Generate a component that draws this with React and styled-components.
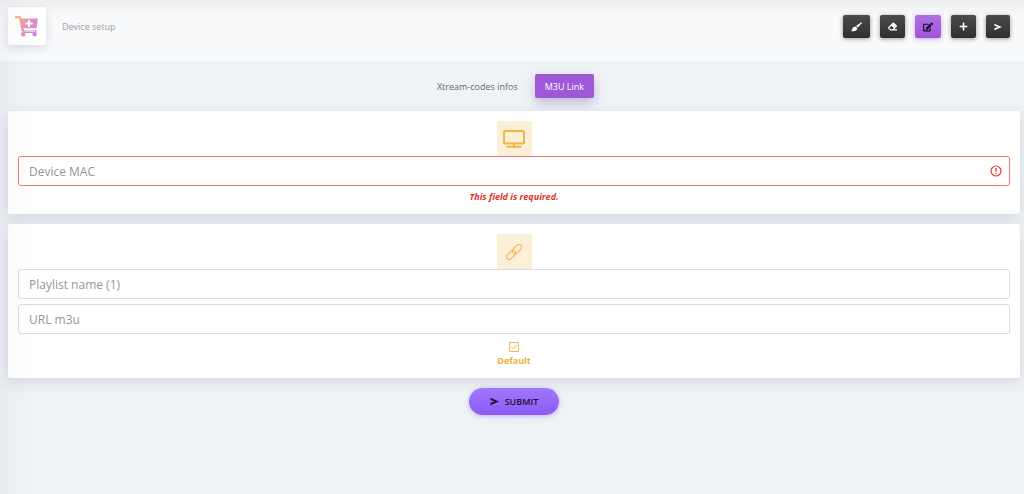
import { useState } from 'react';
import styled, { createGlobalStyle, css } from 'styled-components';
import { FaEdit, FaEraser, FaPlus } from 'react-icons/fa';

const GlobalStyle = createGlobalStyle`
  * {
    box-sizing: border-box;
  }
  body {
    margin: 0;
    min-height: 100vh;
    background-color: #eff3f6;
    font-family: 'Open Sans', 'Noto Sans', sans-serif;
    font-size: 9px;
    color: #333;
  }
  button,
  input {
    font-family: inherit;
  }
`;

const PageStyled = styled.div`
  min-height: 100vh;

  /* soft shade along the left edge */
  &::before {
    content: '';
    position: fixed;
    inset: 0 auto 0 0;
    width: 32px;
    background: linear-gradient(to right, rgba(60, 50, 80, 0.03), transparent);
    pointer-events: none;
  }
`;

const HeaderStyled = styled.header`
  display: flex;
  align-items: flex-start;
  justify-content: space-between;
  height: 61px;
  padding: 7px 14px 0 8px;
  background: linear-gradient(#eeeff1, #f7f9fb 16px);
`;

const BrandStyled = styled.div`
  display: flex;
  align-items: center;
  gap: 16px;
`;

const LogoStyled = styled.a`
  display: flex;
  align-items: center;
  justify-content: center;
  width: 38px;
  height: 38px;
  border-radius: 2px;
  background-color: white;
  box-shadow: 0 3px 8px rgba(60, 60, 90, 0.15);
`;

const TitleStyled = styled.h1`
  margin: 0;
  font-size: 9px;
  font-weight: 400;
  color: #a0a0a2;
`;

const ToolbarStyled = styled.div`
  display: flex;
  gap: 10px;
  padding-top: 8px;
`;

const ToolButtonStyled = styled.button`
  display: flex;
  align-items: center;
  justify-content: center;
  height: 23px;
  padding: 0 8px;
  border: none;
  border-radius: 2px;
  cursor: pointer;
  color: white;
  background: linear-gradient(#4b4b4b, #303030);
  box-shadow: 0 1px 4px rgba(0, 0, 0, 0.4);

  ${({ $active }) =>
    $active &&
    css`
      color: #160d22;
      background: linear-gradient(#af70e2, #9e55d8);
      box-shadow: 0 1px 4px rgba(158, 85, 216, 0.5);
    `}
`;

const MainStyled = styled.main`
  padding: 13px 4px 20px 8px;
`;

const TabsStyled = styled.div`
  display: flex;
  justify-content: center;
  margin-bottom: 13px;
`;

const TabStyled = styled.button`
  height: 24px;
  margin-right: 7px;
  padding: 0 10px;
  border: none;
  border-radius: 2px;
  font-size: 9px;
  cursor: pointer;
  color: ${({ $active }) => ($active ? 'white' : '#66696d')};
  background-color: ${({ $active }) => ($active ? '#9d58d8' : 'transparent')};
  box-shadow: ${({ $active }) => ($active ? '0 5px 12px rgba(100, 50, 150, 0.3)' : 'none')};
`;

const FormStyled = styled.form`
  display: flex;
  flex-direction: column;
  gap: 10px;
`;

const CardStyled = styled.section`
  display: flex;
  flex-direction: column;
  align-items: center;
  padding: 10px;
  border-radius: 2px;
  background-color: white;
  box-shadow: 0 4px 14px rgba(50, 40, 70, 0.13);
`;

const BadgeStyled = styled.div`
  display: flex;
  align-items: center;
  justify-content: center;
  width: 35px;
  height: 35px;
  border-radius: 2px;
  color: #f1b443;
  background-color: #fcefd8;
`;

const FieldsStyled = styled.div`
  display: flex;
  flex-direction: column;
  gap: 5px;
  width: 100%;
`;

const FieldStyled = styled.div`
  position: relative;
  color: #e0413a;

  svg {
    position: absolute;
    top: 9px;
    right: 8px;
  }
`;

const InputStyled = styled.input`
  display: block;
  width: 100%;
  height: 30px;
  padding: 0 10px;
  border: 1px solid ${({ $invalid }) => ($invalid ? '#ea7871' : '#dcdde4')};
  border-radius: 3px;
  outline: none;
  font-size: 12px;
  color: #333;
  background-color: white;

  &::placeholder {
    color: #92969b;
    opacity: 1;
  }
`;

const ErrorStyled = styled.p`
  margin: 5px 0 1px;
  font-size: 9px;
  line-height: 12px;
  font-weight: 700;
  font-style: italic;
  color: #dd332d;
`;

const DefaultStyled = styled.label`
  display: flex;
  flex-direction: column;
  align-items: center;
  gap: 2px;
  margin-top: 8px;
  font-size: 9px;
  line-height: 14px;
  font-weight: 700;
  cursor: pointer;
  color: #f0b13e;
`;

const CheckStyled = styled.span`
  display: grid;

  input,
  svg {
    grid-area: 1 / 1;
    width: 10px;
    height: 10px;
    margin: 0;
  }
  input {
    appearance: none;
    border: 1px solid #f0b655;
    border-radius: 1px;
  }
  svg {
    visibility: hidden;
    pointer-events: none;
  }
  input:checked + svg {
    visibility: visible;
  }
`;

const SubmitStyled = styled.button`
  display: flex;
  align-items: center;
  align-self: center;
  gap: 6px;
  height: 27px;
  padding: 0 21px;
  border: none;
  border-radius: 14px;
  font-size: 9px;
  font-weight: 600;
  cursor: pointer;
  color: #1c1230;
  background: linear-gradient(#a276fb, #8c5bf6);
  box-shadow: 0 1px 5px rgba(140, 91, 246, 0.45);
`;

const CartIcon = () => (
  <svg width="24" height="21" viewBox="0 0 24 21" aria-hidden="true">
    <defs>
      <linearGradient id="cart" x1="0" y1="0" x2="24" y2="21" gradientUnits="userSpaceOnUse">
        <stop offset="0" stopColor="#f5b87a" />
        <stop offset="0.5" stopColor="#e38ebd" />
        <stop offset="1" stopColor="#cf80ee" />
      </linearGradient>
    </defs>
    <g fill="url(#cart)">
      <path
        fillRule="evenodd"
        d="M1 0H5.4L6.2 2.6H23L21.4 12.2H8.2L9 14H21.4V17H8.4V15.6H6.8L4 2.2H1A1.1 1.1 0 0 1 1 0ZM13 4V6.4H10.4V8.4H13V11H15V8.4H17.6V6.4H15V4ZM9.4 14.6V15.6H20V14.6Z"
      />
      <circle cx="8.2" cy="18.2" r="2.2" />
      <circle cx="19.6" cy="18.2" r="2.2" />
    </g>
  </svg>
);

const BrushIcon = () => (
  <svg width="11" height="10" viewBox="0 0 11 10" fill="currentColor" aria-hidden="true">
    <path d="M10.3.2Q11.2.4 10.7 1.2L6.8 5.6 5 4.1Z" />
    <path d="M4.4 4.4 6.4 6.2C6.2 8.6 3.4 9.6 0 9 1.6 8 .8 4.8 4.4 4.4Z" />
  </svg>
);

const SendIcon = ({ size = 9 }) => (
  <svg width={size} height={size} viewBox="0 0 18 18" fill="currentColor" aria-hidden="true">
    <path d="M1 1.5 17.5 9 1 16.5V12L9 9 1 6Z" />
  </svg>
);

const DisplayIcon = () => (
  <svg width="22" height="18" viewBox="0 0 22 18" fill="none" stroke="currentColor" aria-hidden="true">
    <rect x="1" y="1" width="20" height="12.5" rx="1" strokeWidth="2" />
    <path d="M11 14v2M3.5 16.8h15" strokeWidth="2" />
  </svg>
);

const LinkIcon = () => (
  <svg width="16" height="16" viewBox="0 0 16 16" fill="none" stroke="currentColor" aria-hidden="true">
    <g transform="rotate(-45 8 8)">
      <rect x="-1.5" y="5.3" width="10.8" height="5.4" rx="2.7" />
      <rect x="6.7" y="5.3" width="10.8" height="5.4" rx="2.7" />
    </g>
  </svg>
);

const AlertIcon = () => (
  <svg width="12" height="12" viewBox="0 0 12 12" fill="none" stroke="currentColor" aria-hidden="true">
    <circle cx="6" cy="6" r="5" strokeWidth="1.2" />
    <path d="M6 2.8v4M6 8v1.3" strokeWidth="1.4" />
  </svg>
);

const tools = [
  { label: 'Clean', icon: <BrushIcon /> },
  { label: 'Erase', icon: <FaEraser size={9} /> },
  { label: 'Edit', icon: <FaEdit size={10} />, active: true },
  { label: 'Add', icon: <FaPlus size={9} /> },
  { label: 'Send', icon: <SendIcon size={8} /> },
];

const tabs = ['Xtream-codes infos', 'M3U Link'];

const App = () => {
  const [tab, setTab] = useState('M3U Link');

  return (
    <PageStyled>
      <GlobalStyle />
      <HeaderStyled>
        <BrandStyled>
          <LogoStyled href="#" aria-label="Store">
            <CartIcon />
          </LogoStyled>
          <TitleStyled>Device setup</TitleStyled>
        </BrandStyled>
        <ToolbarStyled>
          {tools.map(({ label, icon, active }) => (
            <ToolButtonStyled key={label} type="button" aria-label={label} $active={active}>
              {icon}
            </ToolButtonStyled>
          ))}
        </ToolbarStyled>
      </HeaderStyled>
      <MainStyled>
        <TabsStyled role="tablist">
          {tabs.map((name) => (
            <TabStyled
              key={name}
              type="button"
              role="tab"
              aria-selected={tab === name}
              $active={tab === name}
              onClick={() => setTab(name)}
            >
              {name}
            </TabStyled>
          ))}
        </TabsStyled>
        <FormStyled onSubmit={(e) => e.preventDefault()}>
          <CardStyled>
            <BadgeStyled>
              <DisplayIcon />
            </BadgeStyled>
            <FieldsStyled>
              <FieldStyled>
                <InputStyled
                  type="text"
                  placeholder="Device MAC"
                  aria-label="Device MAC"
                  aria-invalid="true"
                  aria-describedby="mac-error"
                  $invalid
                />
                <AlertIcon />
              </FieldStyled>
            </FieldsStyled>
            <ErrorStyled id="mac-error">This field is required.</ErrorStyled>
          </CardStyled>
          <CardStyled>
            <BadgeStyled>
              <LinkIcon />
            </BadgeStyled>
            <FieldsStyled>
              <InputStyled type="text" placeholder="Playlist name (1)" aria-label="Playlist name (1)" />
              <InputStyled type="text" placeholder="URL m3u" aria-label="URL m3u" />
            </FieldsStyled>
            <DefaultStyled>
              <CheckStyled>
                <input type="checkbox" defaultChecked />
                <svg viewBox="0 0 10 10" fill="none" stroke="currentColor" aria-hidden="true">
                  <path d="M2.5 4.8 4.4 6.7 7.8 3" />
                </svg>
              </CheckStyled>
              Default
            </DefaultStyled>
          </CardStyled>
          <SubmitStyled type="submit">
            <SendIcon />
            SUBMIT
          </SubmitStyled>
        </FormStyled>
      </MainStyled>
    </PageStyled>
  );
};

export default App;
